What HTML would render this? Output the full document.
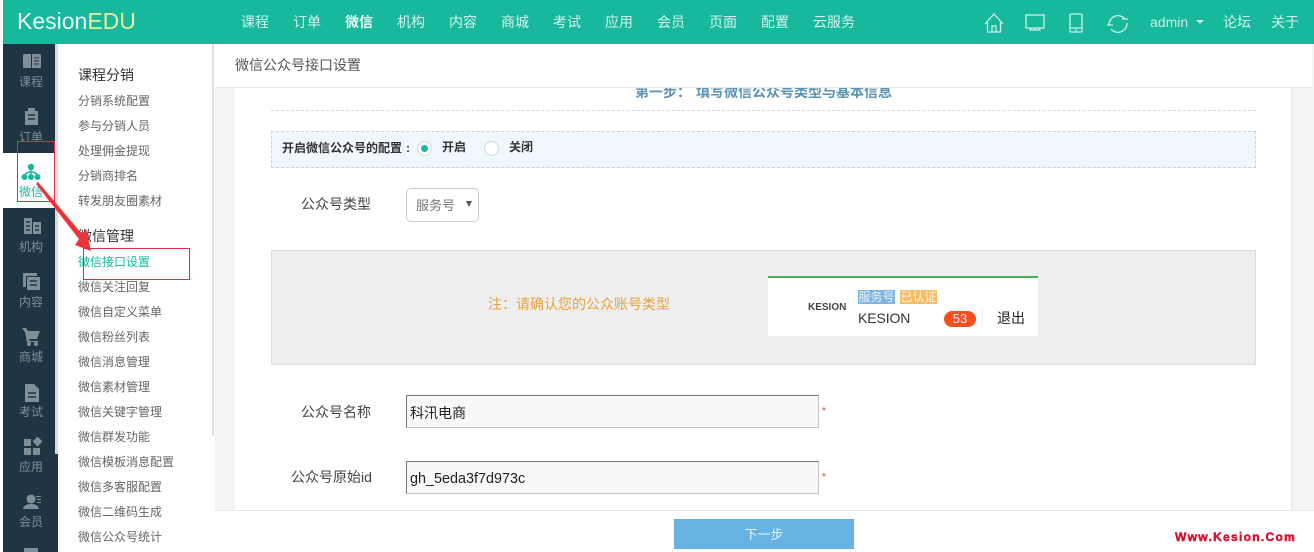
<!DOCTYPE html>
<html><head><meta charset="utf-8">
<style>
html,body{margin:0;padding:0;width:1314px;height:552px;overflow:hidden;background:#fff}
body{position:relative;font-family:"Liberation Sans","Noto Sans CJK SC",sans-serif;color:#555}
.a{position:absolute;white-space:nowrap}
.nav{top:14px;font-size:14px;line-height:16px;color:#d4f3ec}
.side{left:3px;width:56px;text-align:center;font-size:12px;line-height:14px;color:#808e97}
.m{left:78px;font-size:12px;line-height:16px;color:#666}
.h{left:78px;font-size:14px;line-height:18px;color:#333}
svg{position:absolute;overflow:visible}
</style></head><body>
<div class="a" style="left:3px;top:0;width:1311px;height:44px;background:#17b89c"></div>
<div class="a" style="left:17px;top:8px;font-size:23px;line-height:27px;color:#e6fbf6">Kesion<span style="color:#e4ec9d">EDU</span></div>
<div class="a nav" style="left:241px">课程</div>
<div class="a nav" style="left:293px">订单</div>
<div class="a nav" style="left:345px;font-weight:bold;color:#eafaf6">微信</div>
<div class="a nav" style="left:397px">机构</div>
<div class="a nav" style="left:449px">内容</div>
<div class="a nav" style="left:501px">商城</div>
<div class="a nav" style="left:553px">考试</div>
<div class="a nav" style="left:605px">应用</div>
<div class="a nav" style="left:657px">会员</div>
<div class="a nav" style="left:709px">页面</div>
<div class="a nav" style="left:761px">配置</div>
<div class="a nav" style="left:813px">云服务</div>
<svg style="left:0;top:0" width="1314" height="44" fill="none" stroke="#c9f0e7" stroke-width="1.3">
<path d="M985 24 L994 14 L1003 24 M987.5 22 V32 H1000.5 V22 M992 32 V26 H996 V32"/>
<rect x="1026" y="15" width="18" height="13"/><path d="M1031 28 L1030 30 H1040 L1039 28 M1035 28 V30"/>
<rect x="1070" y="14" width="12" height="18" rx="1"/><path d="M1070 28 H1082 M1075 30 H1077"/>
<path d="M1109 25 A9 9 0 0 1 1125 19 M1127 23 A9 9 0 0 1 1111 29 M1107 25 L1113 25 M1122 19 L1128 19"/>
</svg>
<div class="a nav" style="left:1150px;color:#cdeee6">admin</div>
<div class="a" style="left:1196px;top:20px;border:4px solid transparent;border-top-color:#d4f3ec;border-bottom:0"></div>
<div class="a nav" style="left:1223px">论坛</div>
<div class="a nav" style="left:1271px">关于</div>

<div class="a" style="left:3px;top:44px;width:55px;height:508px;background:#1f3544"></div>
<div class="a" style="left:55px;top:44px;width:3px;height:410px;background:#d5dde0"></div>
<div class="a" style="left:3px;top:153px;width:52px;height:55px;background:#fff"></div>
<svg style="left:0;top:0" width="58" height="552" fill="#808e97">
<path d="M23 56 Q23 54 25 54 H31 V68 H23 Z M32 54 H39 Q41 54 41 56 V68 H32 Z"/>
<path d="M34 58 H39 M34 61 H39 M34 64 H39" stroke="#1f3544" fill="none"/>
<path d="M25 111 H28 V108 H35 V111 H38 V125 H25 Z"/>
<path d="M28 115 H35 M28 119 H35" stroke="#1f3544" stroke-width="1.5" fill="none"/>
<path d="M24 218 H32 V234 H24 Z M33 222 H41 V234 H33 Z"/>
<path d="M26 222 H30 M26 226 H30 M26 230 H30 M35 226 H39 M35 230 H39" stroke="#1f3544" stroke-width="1.5" fill="none"/>
<path d="M23 273 H37 V276 H26 V287 H23 Z"/><rect x="27" y="277" width="13" height="13"/>
<path d="M30 281 H37 M30 285 H37" stroke="#1f3544" stroke-width="1.5" fill="none"/>
<path d="M22 328 H26 L28 331 H40 L37 339 H29 L30 341 H38 V342 H27 L25 332 Z"/><circle cx="29" cy="344" r="2"/><circle cx="36" cy="344" r="2"/>
<path d="M25 384 H34 L39 389 V402 H25 Z"/>
<path d="M28 393 H36 M28 397 H36" stroke="#1f3544" stroke-width="1.5" fill="none"/>
<rect x="24" y="439" width="7" height="7"/><rect x="34" y="438" width="7" height="7" transform="rotate(45 37.5 441.5)"/><rect x="24" y="448" width="7" height="7"/><rect x="33" y="448" width="7" height="7"/>
<circle cx="31" cy="499" r="4.5"/><path d="M23 509 Q24 504 31 504 Q38 504 39 509 Z"/><rect x="36" y="496" width="5" height="1"/><rect x="37" y="499" width="4" height="1"/><rect x="37" y="502" width="4" height="1"/>
<rect x="24" y="548" width="14" height="4"/>
</svg>
<svg style="left:0;top:0" width="58" height="200" fill="#17b89c" stroke="#17b89c">
<circle cx="31" cy="167" r="2.7"/><circle cx="24.5" cy="177" r="2.5"/><circle cx="31" cy="177" r="2.5"/><circle cx="37.5" cy="177" r="2.5"/>
<path d="M31 168 V177 M24.5 177 Q24.5 172 31 172 Q37.5 172 37.5 177" fill="none" stroke-width="1.4"/>
</svg>
<div class="a side" style="top:75px">课程</div>
<div class="a side" style="top:130px">订单</div>
<div class="a side" style="top:185px;color:#17b89c">微信</div>
<div class="a side" style="top:240px">机构</div>
<div class="a side" style="top:295px">内容</div>
<div class="a side" style="top:350px">商城</div>
<div class="a side" style="top:405px">考试</div>
<div class="a side" style="top:460px">应用</div>
<div class="a side" style="top:515px">会员</div>

<div class="a" style="left:212px;top:44px;width:2px;height:392px;background:#dbe0e3"></div>

<div class="a h" style="top:66px">课程分销</div>
<div class="a m" style="top:93px">分销系统配置</div>
<div class="a m" style="top:118px">参与分销人员</div>
<div class="a m" style="top:143px">处理佣金提现</div>
<div class="a m" style="top:168px">分销商排名</div>
<div class="a m" style="top:193px">转发朋友圈素材</div>
<div class="a h" style="top:227px">微信管理</div>
<div class="a m" style="top:254px;color:#17b89c">微信接口设置</div>
<div class="a m" style="top:279px">微信关注回复</div>
<div class="a m" style="top:304px">微信自定义菜单</div>
<div class="a m" style="top:329px">微信粉丝列表</div>
<div class="a m" style="top:354px">微信消息管理</div>
<div class="a m" style="top:379px">微信素材管理</div>
<div class="a m" style="top:404px">微信关键字管理</div>
<div class="a m" style="top:429px">微信群发功能</div>
<div class="a m" style="top:454px">微信模板消息配置</div>
<div class="a m" style="top:479px">微信多客服配置</div>
<div class="a m" style="top:504px">微信二维码生成</div>
<div class="a m" style="top:529px">微信公众号统计</div>

<div class="a" style="left:215px;top:44px;width:1099px;height:466px;background:#f2f4f6"></div>
<div class="a" style="left:235px;top:87px;width:1056px;height:423px;background:#fff;border-right:1px solid #e3e5e7"></div>
<div class="a" style="left:215px;top:44px;width:1097px;height:43px;background:#fff;border-bottom:1px solid #e6e8ea"></div>
<div class="a" style="left:235px;top:57px;font-size:14px;line-height:16px;color:#555">微信公众号接口设置</div>

<div class="a" style="left:635px;top:88px;height:11px;overflow:hidden;width:270px;font-size:14px;line-height:16px;color:#5b93b5;font-weight:bold"><span style="position:absolute;left:0;top:-4px">第一步：</span><span style="position:absolute;left:61px;top:-4px">填写微信公众号类型与基本信息</span></div>
<div class="a" style="left:271px;top:110px;width:985px;border-top:1px dashed #d8d8d8"></div>

<div class="a" style="left:271px;top:131px;width:983px;height:35px;background:#eff8fd;border:1px dashed #ccd3d8"></div>
<div class="a" style="left:282px;top:140px;font-size:12px;line-height:16px;font-weight:bold;color:#333">开启微信公众号的配置</div>
<div class="a" style="left:406px;top:140px;font-size:12px;line-height:16px;font-weight:bold;color:#333">:</div>
<div class="a" style="left:417px;top:141px;width:13px;height:13px;border:1px solid #d5d5d5;border-radius:50%;background:#fff"></div>
<div class="a" style="left:421px;top:145px;width:7px;height:7px;border-radius:50%;background:#17b89c"></div>
<div class="a" style="left:442px;top:139px;font-size:12px;line-height:16px;font-weight:bold;color:#333">开启</div>
<div class="a" style="left:484px;top:141px;width:13px;height:13px;border:1px solid #d5d5d5;border-radius:50%;background:#fff"></div>
<div class="a" style="left:509px;top:139px;font-size:12px;line-height:16px;font-weight:bold;color:#333">关闭</div>

<div class="a" style="left:301px;top:196px;font-size:14px;line-height:16px;color:#444">公众号类型</div>
<div class="a" style="left:406px;top:188px;width:71px;height:32px;border:1px solid #ccc;border-radius:5px;background:#fff"></div>
<div class="a" style="left:416px;top:198px;font-size:13px;line-height:16px;color:#777">服务号</div>
<div class="a" style="left:466px;top:201px;border:3px solid transparent;border-top:6px solid #555;border-bottom:0"></div>

<div class="a" style="left:271px;top:250px;width:983px;height:113px;background:#eee;border:1px solid #ddd;border-radius:2px"></div>
<div class="a" style="left:488px;top:296px;font-size:14px;line-height:16px;color:#e8a33d">注：请确认您的公众账号类型</div>
<div class="a" style="left:768px;top:276px;width:270px;height:60px;background:#fff"></div>
<div class="a" style="left:768px;top:276px;width:270px;height:2px;background:#4caf50"></div>
<div class="a" style="left:808px;top:303px;font-size:10px;line-height:10px;font-weight:bold;color:#444">KESION</div>
<div class="a" style="left:858px;top:290px;width:37px;height:14px;background:#7fb5dd;color:#e8f3fb;font-size:12px;line-height:14px;text-align:center">服务号</div>
<div class="a" style="left:900px;top:290px;width:37px;height:14px;background:#f6bd66;color:#fff4e0;font-size:12px;line-height:14px;text-align:center">已认证</div>
<div class="a" style="left:858px;top:309px;font-size:14px;line-height:18px;color:#333;letter-spacing:-.1px">KESION</div>
<div class="a" style="left:944px;top:311px;width:32px;height:16px;border-radius:8px;background:#f4511e;color:#fde;font-size:13px;line-height:16px;text-align:center">53</div>
<div class="a" style="left:982px;top:309px;width:1px;height:18px;background:#eee"></div>
<div class="a" style="left:997px;top:310px;font-size:14px;line-height:16px;color:#222">退出</div>

<div class="a" style="left:301px;top:404px;font-size:14px;line-height:16px;color:#444">公众号名称</div>
<div class="a" style="left:406px;top:395px;width:411px;height:31px;background:#f8f8f8;border:1px solid #c4c4c4;border-top-color:#777;border-left-color:#777"></div>
<div class="a" style="left:410px;top:405px;font-size:14px;line-height:17px;color:#222">科汛电商</div>
<div class="a" style="left:822px;top:406px;font-size:10px;line-height:12px;color:#e33">*</div>
<div class="a" style="left:291px;top:469px;font-size:14px;line-height:16px;color:#444">公众号原始id</div>
<div class="a" style="left:406px;top:461px;width:411px;height:31px;background:#f8f8f8;border:1px solid #c4c4c4;border-top-color:#777;border-left-color:#777"></div>
<div class="a" style="left:410px;top:471px;font-size:14.4px;line-height:16px;color:#222">gh_5eda3f7d973c</div>
<div class="a" style="left:822px;top:472px;font-size:10px;line-height:12px;color:#e33">*</div>

<div class="a" style="left:215px;top:510px;width:1099px;height:42px;background:#fff;border-top:1px solid #e8e8e8"></div>
<div class="a" style="left:674px;top:519px;width:180px;height:30px;background:#65b2e3;color:#e6f3fb;font-size:13px;line-height:31px;text-align:center">下一步</div>
<div class="a" style="left:1175px;top:530px;font-size:12px;line-height:14px;font-weight:bold;color:#d9102f;letter-spacing:1.3px;-webkit-text-stroke:.5px #d9102f">Www.Kesion.Com</div>

<svg style="left:0;top:0" width="120" height="270">
<path d="M36 184 L38 182 L82 234 L86 229 L91 251 L75 245 L79 239 Z" fill="#ee3338"/>
</svg>
<div class="a" style="left:17px;top:141px;width:36px;height:59px;border:1px solid #d9304a"></div>
<div class="a" style="left:83px;top:248px;width:105px;height:30px;border:1px solid #d9304a"></div>
</body></html>
